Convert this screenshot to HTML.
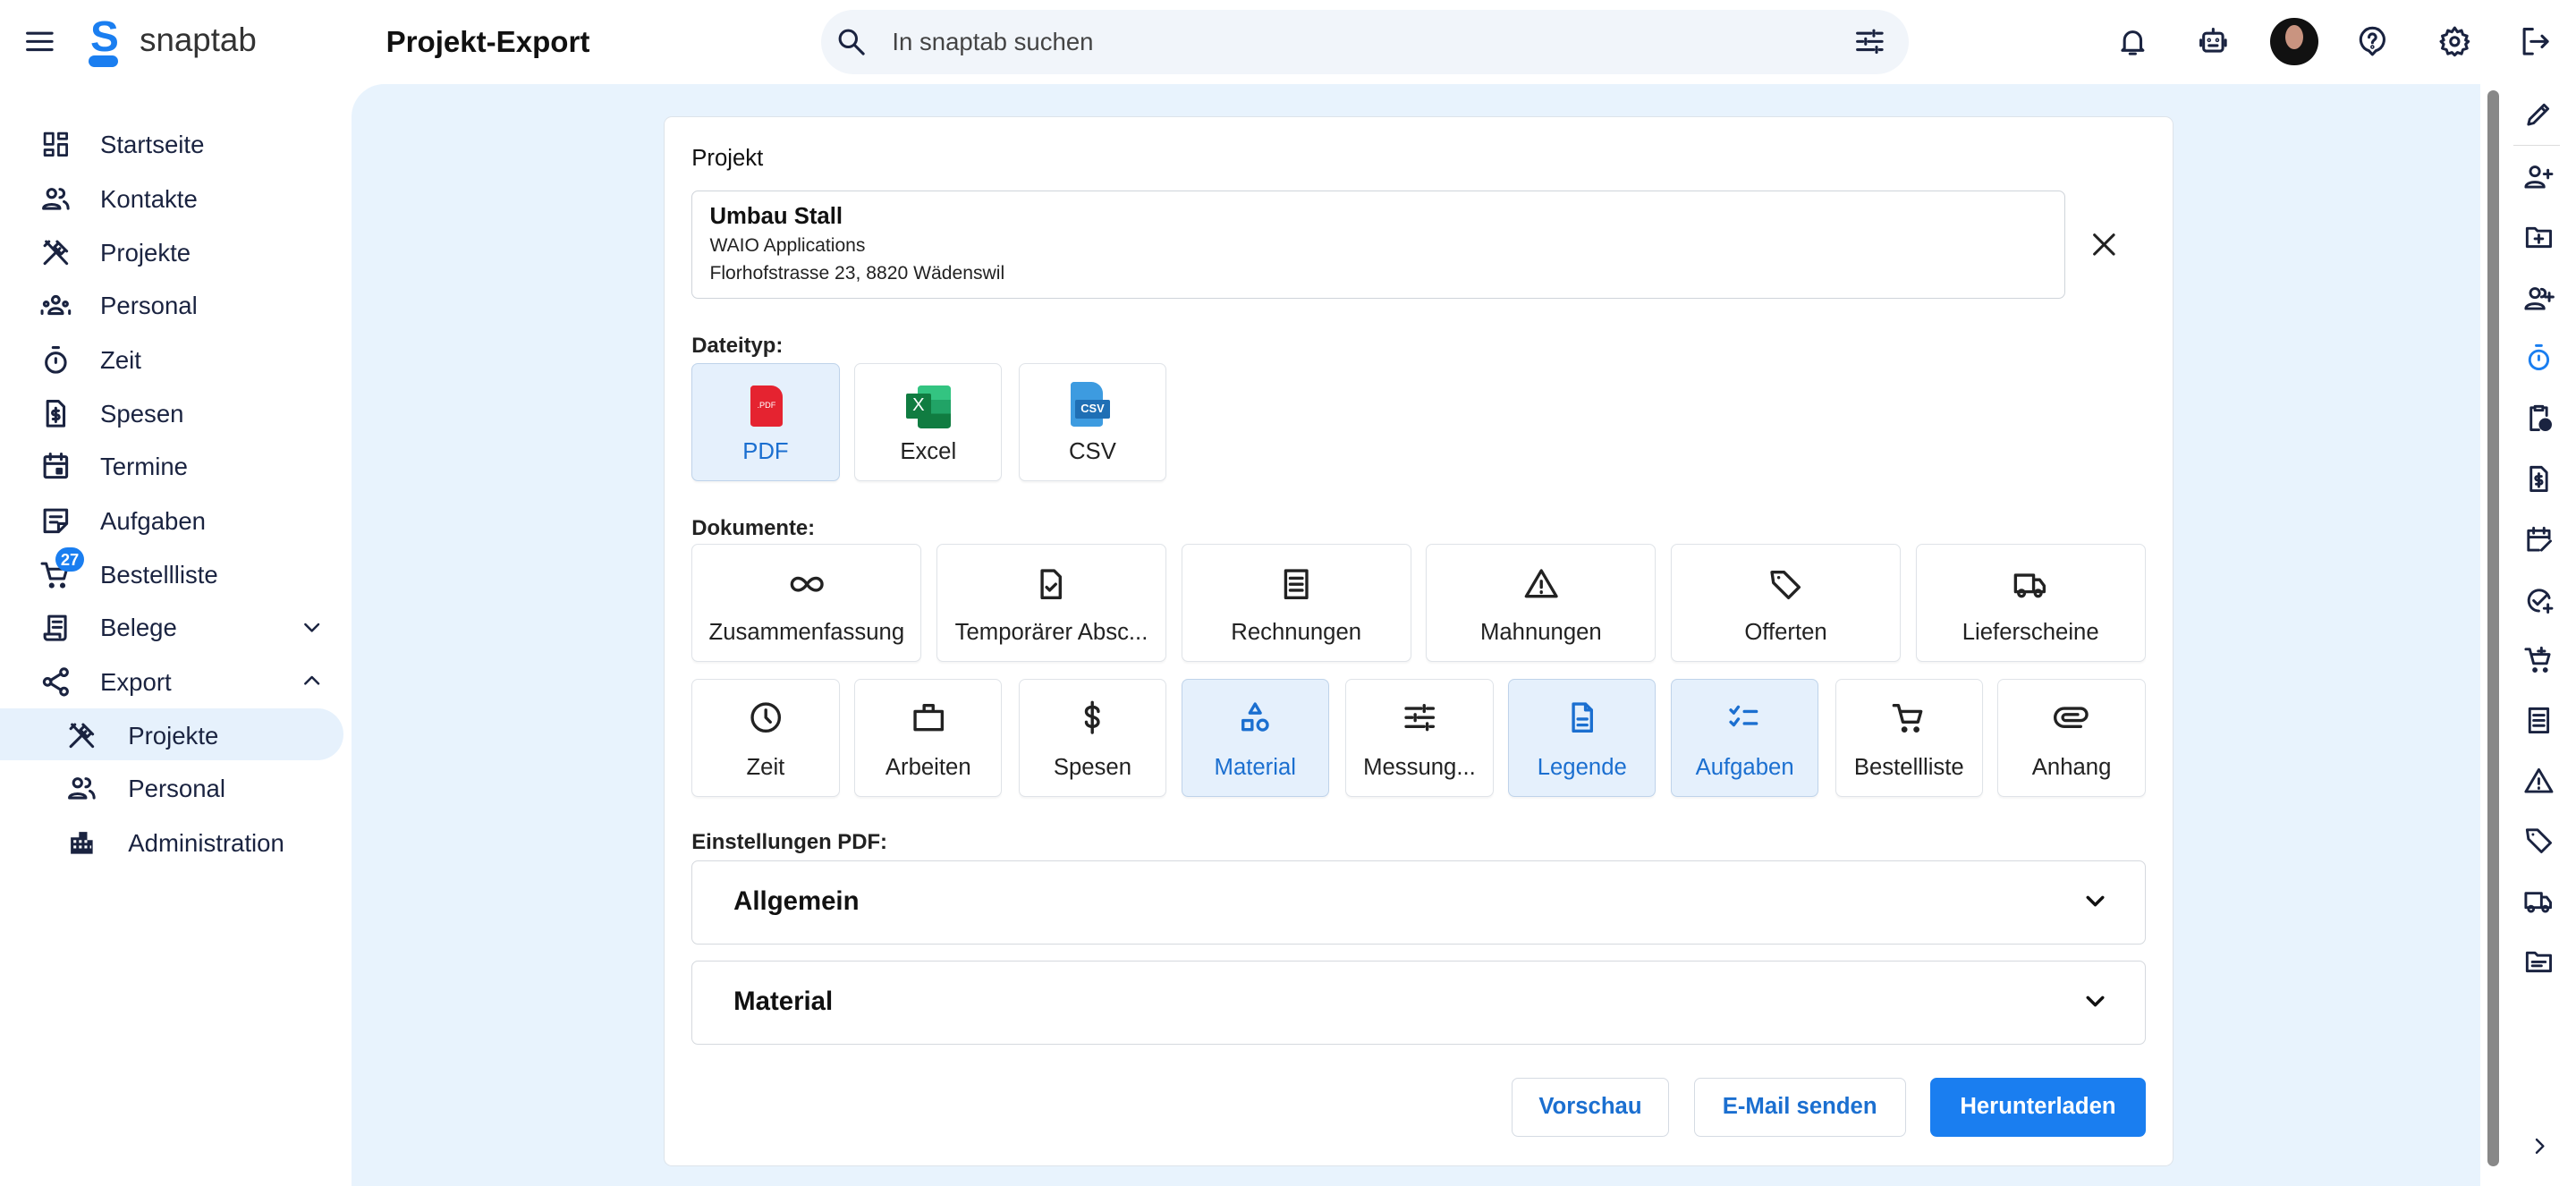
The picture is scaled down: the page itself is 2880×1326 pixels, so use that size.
<!DOCTYPE html>
<html><head><meta charset="utf-8">
<style>
*{box-sizing:border-box;margin:0;padding:0}
html,body{width:2880px;height:1326px;overflow:hidden;background:#fff}
#r{position:absolute;left:0;top:0;width:1568px;height:722px;zoom:1.83673;font-family:"Liberation Sans",sans-serif;color:#1a2340}
.a{position:absolute}
svg{display:block}
.ic{position:absolute;width:20px;height:20px;fill:none;stroke:#1a2340;stroke-width:2;stroke-linecap:round;stroke-linejoin:round}
.nav{position:absolute;font-size:15px;line-height:18px;color:#1a2340}
.tile{position:absolute;background:#fff;border:1px solid #dfe3e8;border-radius:4px;text-align:center;font-size:14px;color:#222;box-shadow:0 1px 1px rgba(0,0,0,.04)}
.tile.s{background:#e5f0fc;border-color:#bfd3ea;color:#1b6fd0}
.tile .t{position:absolute;left:0;right:0;white-space:nowrap;overflow:hidden;text-overflow:ellipsis;padding:0 6px}
.tile svg{position:absolute;left:50%;width:22px;height:22px;margin-left:-11px;fill:none;stroke:#222;stroke-width:2;stroke-linecap:round;stroke-linejoin:round}
.tile.s svg{stroke:#1b6fd0}
.lbl{position:absolute;font-size:13px;font-weight:bold;color:#222}
.acc{position:absolute;left:421px;width:885px;height:51px;border:1px solid #d5d9de;border-radius:4px;background:#fff}
.acc b{position:absolute;left:25px;top:15px;font-size:16px;color:#111}
.btn{position:absolute;top:656px;height:36px;border:1px solid #d5dbe3;border-radius:4px;background:#fff;color:#1b6fd0;font-size:14px;font-weight:bold;text-align:center;line-height:34px}
.rr{position:absolute;left:1536px;width:19px;height:19px;fill:none;stroke:#1a2340;stroke-width:2;stroke-linecap:round;stroke-linejoin:round}
</style></head><body><div id="r">

<!-- header -->
<svg class="ic" style="left:14px;top:15px" viewBox="0 0 24 24"><path d="M3 6h18M3 12h18M3 18h18"/></svg>
<div class="a" style="left:52px;top:11px;width:22px;height:30px">
<div class="a" style="left:3px;top:0;font-size:26px;font-weight:bold;color:#1a7ef0;line-height:24px">S</div>
<div class="a" style="left:2px;top:23px;width:18px;height:7px;border-radius:4px;background:#1a7ef0"></div></div>
<div class="a" style="left:85px;top:13px;font-size:20px;color:#333">snaptab</div>
<div class="a" style="left:235px;top:16px;font-size:18px;font-weight:bold;color:#111">Projekt-Export</div>
<div class="a" style="left:500px;top:6px;width:662px;height:39px;border-radius:20px;background:#f1f5fa"></div>
<svg class="ic" style="left:508px;top:15px" viewBox="0 0 24 24"><circle cx="10" cy="10" r="6"/><path d="M15 15l6 6"/></svg>
<div class="a" style="left:543px;top:17px;font-size:15px;color:#444">In snaptab suchen</div>
<svg class="ic" style="left:1128px;top:15px" viewBox="0 0 24 24"><path d="M3 6h10M17 6h4M15 4v4M3 12h4M11 12h10M9 10v4M3 18h12M19 18h2M17 16v4"/></svg>
<svg class="ic" style="left:1288px;top:15px" viewBox="0 0 24 24"><path d="M6 17V11a6 6 0 0 1 12 0v6l1.5 1.5h-15z M10 21h4"/></svg>
<svg class="ic" style="left:1337px;top:15px" viewBox="0 0 24 24"><rect x="5" y="6" width="14" height="13" rx="2"/><path d="M12 3v3M3 11v4M21 11v4M9 15h6"/><circle cx="9" cy="11" r=".5"/><circle cx="15" cy="11" r=".5"/></svg>
<div class="a" style="left:1382px;top:11px;width:29px;height:29px;border-radius:50%;background:#111;overflow:hidden"><div class="a" style="left:9px;top:4px;width:11px;height:15px;border-radius:50%;background:#c99480"></div></div>
<svg class="ic" style="left:1434px;top:15px" viewBox="0 0 24 24"><path d="M12 21.5l-2.5-2.7A8.5 8.5 0 1 1 14.5 18.8z"/><path d="M9.5 9a2.5 2.5 0 0 1 5 0c0 2-2.5 2-2.5 4"/><circle cx="12" cy="16" r=".5"/></svg>
<svg class="ic" style="left:1484px;top:15px" viewBox="0 0 24 24"><circle cx="12" cy="12" r="3"/><path d="M12 2l2 3 3-1 1 3 3 1-1 3 2 1-2 2 1 3-3 1-1 3-3-1-2 2-2-2-3 1-1-3-3-1 1-3-2-2 2-1-1-3 3-1 1-3 3 1z"/></svg>
<svg class="ic" style="left:1533px;top:15px" viewBox="0 0 24 24"><path d="M10 3H4v18h6M9 12h12M17 8l4 4-4 4"/></svg>

<!-- sidebar -->
<svg class="ic" style="left:24px;top:78px;stroke-width:1.8" viewBox="0 0 24 24"><rect x="4" y="4" width="6" height="8"/><rect x="14" y="4" width="6" height="4"/><rect x="4" y="16" width="6" height="4"/><rect x="14" y="12" width="6" height="8"/></svg><div class="nav" style="left:61px;top:79px">Startseite</div>
<svg class="ic" style="left:24px;top:111px" viewBox="0 0 24 24"><circle cx="9" cy="8" r="3"/><path d="M3 19c0-4 12-4 12 0zM15 5a3 3 0 0 1 0 6M18 14c2 1 3 3 3 5"/></svg><div class="nav" style="left:61px;top:112px">Kontakte</div>
<svg class="ic" style="left:24px;top:144px" viewBox="0 0 24 24"><path d="M4 20L15 9M13 4l7 7M14 5l-3 3 5 5 3-3M5 4l15 16M4 7l3-3"/></svg><div class="nav" style="left:61px;top:145px">Projekte</div>
<svg class="ic" style="left:24px;top:176px" viewBox="0 0 24 24"><circle cx="12" cy="8" r="2.5"/><path d="M7 18c0-5 10-5 10 0z"/><circle cx="5" cy="11" r="1.5"/><circle cx="19" cy="11" r="1.5"/><path d="M2 18v-2M22 18v-2"/></svg><div class="nav" style="left:61px;top:177px">Personal</div>
<svg class="ic" style="left:24px;top:209px" viewBox="0 0 24 24"><circle cx="12" cy="14" r="7"/><path d="M10 3h4M12 11v3"/></svg><div class="nav" style="left:61px;top:210px">Zeit</div>
<svg class="ic" style="left:24px;top:242px" viewBox="0 0 24 24"><path d="M6 3h8l4 4v14H6zM14 10h-3a1.5 1.5 0 0 0 0 3h2a1.5 1.5 0 0 1 0 3h-3M12 8v10"/></svg><div class="nav" style="left:61px;top:243px">Spesen</div>
<svg class="ic" style="left:24px;top:274px" viewBox="0 0 24 24"><rect x="4" y="5" width="16" height="15" rx="1"/><path d="M4 10h16M8 3v4M16 3v4"/><rect x="13" y="14" width="3" height="3" fill="#1a2340"/></svg><div class="nav" style="left:61px;top:275px">Termine</div>
<svg class="ic" style="left:24px;top:307px" viewBox="0 0 24 24"><path d="M4 4h16v10l-6 6H4zM8 9h8M8 13h5M14 20v-6h6"/></svg><div class="nav" style="left:61px;top:308px">Aufgaben</div>
<svg class="ic" style="left:24px;top:340px" viewBox="0 0 24 24"><path d="M2 4h3l3 11h10l2-7H7"/><circle cx="9" cy="20" r="1"/><circle cx="17" cy="20" r="1"/></svg>
<div class="a" style="left:34px;top:333px;width:17px;height:15px;border-radius:8px;background:#1a7ef0;color:#fff;font-size:10px;font-weight:bold;text-align:center;line-height:15px">27</div>
<div class="nav" style="left:61px;top:341px">Bestellliste</div>
<svg class="ic" style="left:24px;top:372px" viewBox="0 0 24 24"><path d="M7 17V4h12v15a2 2 0 0 1-2 2H6a2 2 0 0 1-2-2v-2h11v2M10 8h6M10 12h6"/></svg><div class="nav" style="left:61px;top:373px">Belege</div>
<svg class="ic" style="left:182px;top:374px;width:16px;height:16px" viewBox="0 0 24 24"><path d="M6 9l6 6 6-6"/></svg>
<svg class="ic" style="left:24px;top:405px" viewBox="0 0 24 24"><circle cx="18" cy="5" r="2.5"/><circle cx="6" cy="12" r="2.5"/><circle cx="18" cy="19" r="2.5"/><path d="M8 11l8-5M8 13l8 5"/></svg><div class="nav" style="left:61px;top:406px">Export</div>
<svg class="ic" style="left:182px;top:406px;width:16px;height:16px" viewBox="0 0 24 24"><path d="M6 15l6-6 6 6"/></svg>
<div class="a" style="left:0;top:431px;width:209px;height:32px;border-radius:0 16px 16px 0;background:#e6f1fc"></div>
<svg class="ic" style="left:40px;top:438px" viewBox="0 0 24 24"><path d="M4 20L15 9M13 4l7 7M14 5l-3 3 5 5 3-3M5 4l15 16M4 7l3-3"/></svg><div class="nav" style="left:78px;top:439px">Projekte</div>
<svg class="ic" style="left:40px;top:470px" viewBox="0 0 24 24"><circle cx="9" cy="8" r="3"/><path d="M3 19c0-4 12-4 12 0zM15 5a3 3 0 0 1 0 6M18 14c2 1 3 3 3 5"/></svg><div class="nav" style="left:78px;top:471px">Personal</div>
<svg class="ic" style="left:40px;top:503px;fill:#1a2340;stroke:none" viewBox="0 0 24 24"><path d="M4 8h6V4h6v6h4v10H4zM6 10v2h2v-2zm4 0v2h2v-2zm4 0v2h2v-2zM6 14v2h2v-2zm4 0v2h2v-2zm4 0v2h2v-2zm4 0v2h1v-2z" fill-rule="evenodd"/></svg><div class="nav" style="left:78px;top:504px">Administration</div>

<!-- main -->
<div class="a" style="left:214px;top:51px;width:1296px;height:671px;background:#e8f3fd;border-radius:20px 0 0 0"></div>
<div class="a" style="left:1514px;top:55px;width:7px;height:655px;border-radius:4px;background:#888"></div>

<!-- right rail -->
<svg class="rr" style="top:60px" viewBox="0 0 24 24"><path d="M4 20l1-4L16 5l3 3L8 19zM14 7l3 3"/></svg>
<div class="a" style="left:1530px;top:88px;width:28px;height:1px;background:#ddd"></div>
<svg class="rr" style="top:98px" viewBox="0 0 24 24"><circle cx="9" cy="8" r="3.5"/><path d="M2 20c0-5 14-5 14 0zM19 7v6M16 10h6"/></svg>
<svg class="rr" style="top:135px" viewBox="0 0 24 24"><path d="M3 5h6l2 2h10v12H3zM12 10v6M9 13h6"/></svg>
<svg class="rr" style="top:172px" viewBox="0 0 24 24"><circle cx="9" cy="8" r="3.5"/><path d="M2 20c0-5 14-5 14 0zM14 5a3 3 0 0 1 0 6M20 8v6M17 11h6"/></svg>
<svg class="rr" style="top:208px;stroke:#1a7ef0" viewBox="0 0 24 24"><circle cx="12" cy="14" r="7"/><path d="M10 3h4M12 11v3"/></svg>
<svg class="rr" style="top:245px" viewBox="0 0 24 24"><path d="M9 4H6v17h6M15 4h3v6M9 3h6v3H9z"/><circle cx="17" cy="17" r="4" fill="#1a2340"/></svg>
<svg class="rr" style="top:282px" viewBox="0 0 24 24"><path d="M6 3h8l4 4v14H6zM14 10h-3a1.5 1.5 0 0 0 0 3h2a1.5 1.5 0 0 1 0 3h-3M12 8v10"/></svg>
<svg class="rr" style="top:319px" viewBox="0 0 24 24"><path d="M12 20H4V5h16v6M4 10h16M8 3v4M16 3v4M14 20l7-7"/></svg>
<svg class="rr" style="top:356px" viewBox="0 0 24 24"><path d="M20 10A8 8 0 1 0 12 20M8 12l3 3 7-7M19 15v6M16 18h6"/></svg>
<svg class="rr" style="top:392px" viewBox="0 0 24 24"><path d="M2 4h3l3 11h10l2-7H7M14 3v5M11.5 5.5h5"/><circle cx="9" cy="20" r="1"/><circle cx="17" cy="20" r="1"/></svg>
<svg class="rr" style="top:429px" viewBox="0 0 24 24"><path d="M5 3h14v18H5zM8 8h8M8 12h8M8 16h8"/></svg>
<svg class="rr" style="top:466px" viewBox="0 0 24 24"><path d="M12 3L2 20h20zM12 10v4M12 17v.5"/></svg>
<svg class="rr" style="top:502px" viewBox="0 0 24 24"><path d="M3 4h8l10 10-7 7L4 11zM7.5 7.5v.1"/></svg>
<svg class="rr" style="top:539px" viewBox="0 0 24 24"><path d="M2 6h12v11H2zM14 9h4l3 4v4h-7"/><circle cx="6" cy="18" r="2"/><circle cx="17" cy="18" r="2"/></svg>
<svg class="rr" style="top:576px" viewBox="0 0 24 24"><path d="M3 5h6l2 2h10v12H3zM7 12h10M7 15h7"/></svg>
<svg class="rr" style="top:688px;width:16px;left:1538px" viewBox="0 0 24 24"><path d="M9 6l6 6-6 6"/></svg>

<!-- card -->
<div class="a" style="left:404px;top:71px;width:919px;height:639px;background:#fff;border:1px solid #dde3ea;border-radius:5px"></div>
<div class="a" style="left:421px;top:89px;font-size:14px;color:#111">Projekt</div>
<div class="a" style="left:421px;top:116px;width:836px;height:66px;border:1px solid #cfd4da;border-radius:4px"></div>
<div class="a" style="left:432px;top:124px;font-size:14px;font-weight:bold;color:#111">Umbau Stall</div>
<div class="a" style="left:432px;top:143px;font-size:11.5px;color:#222">WAIO Applications</div>
<div class="a" style="left:432px;top:160px;font-size:11.5px;color:#222">Florhofstrasse 23, 8820 Wädenswil</div>
<svg class="ic" style="left:1271px;top:139px;stroke:#222" viewBox="0 0 24 24"><path d="M5 5l14 14M19 5L5 19"/></svg>

<div class="lbl" style="left:421px;top:203px">Dateityp:</div>
<div class="tile s" style="left:421px;top:221px;width:90px;height:72px">
<div class="a" style="left:35px;top:13px;width:20px;height:25px;background:#e52330;border-radius:2px 7px 2px 2px;color:#fff;font-size:5px;line-height:25px">.PDF</div><div class="t" style="top:46px">PDF</div></div>
<div class="tile" style="left:520px;top:221px;width:90px;height:72px">
<div class="a" style="left:38px;top:13px;width:20px;height:26px;border-radius:2px;background:linear-gradient(#33c481 0 33%,#21a366 33% 66%,#107c41 66%)"></div><div class="a" style="left:31px;top:18px;width:15px;height:15px;background:#107c41;color:#fff;font-size:11px;line-height:15px;border-radius:1px">X</div><div class="t" style="top:46px">Excel</div></div>
<div class="tile" style="left:620px;top:221px;width:90px;height:72px">
<div class="a" style="left:31px;top:11px;width:20px;height:27px;background:#3d9be0;border-radius:2px 7px 2px 2px"></div><div class="a" style="left:34px;top:22px;width:21px;height:11px;background:#1f6fb5;color:#fff;font-size:7px;font-weight:bold;line-height:11px;border-radius:1px">CSV</div><div class="t" style="top:46px">CSV</div></div>

<div class="lbl" style="left:421px;top:314px">Dokumente:</div>
<!-- row1 -->
<div class="tile" style="left:421px;top:331px;width:140px;height:72px"><svg style="top:13px" viewBox="0 0 24 24"><path d="M12 12c-2-3-4-4-6-4a4 4 0 0 0 0 8c2 0 4-1 6-4s4-4 6-4a4 4 0 0 1 0 8c-2 0-4-1-6-4"/></svg><div class="t" style="top:46px">Zusammenfassung</div></div>
<div class="tile" style="left:570px;top:331px;width:140px;height:72px"><svg style="top:13px" viewBox="0 0 24 24"><path d="M6 3h8l4 4v14H6zM9 14l2 2 4-4"/></svg><div class="t" style="top:46px">Temporärer Absc...</div></div>
<div class="tile" style="left:719px;top:331px;width:140px;height:72px"><svg style="top:13px" viewBox="0 0 24 24"><path d="M5 3h14v18H5zM8 8h8M8 12h8M8 16h8"/></svg><div class="t" style="top:46px">Rechnungen</div></div>
<div class="tile" style="left:868px;top:331px;width:140px;height:72px"><svg style="top:13px" viewBox="0 0 24 24"><path d="M12 3L2 20h20zM12 10v4M12 17v.5"/></svg><div class="t" style="top:46px">Mahnungen</div></div>
<div class="tile" style="left:1017px;top:331px;width:140px;height:72px"><svg style="top:13px" viewBox="0 0 24 24"><path d="M3 4h8l10 10-7 7L4 11zM7.5 7.5v.1"/></svg><div class="t" style="top:46px">Offerten</div></div>
<div class="tile" style="left:1166px;top:331px;width:140px;height:72px"><svg style="top:13px" viewBox="0 0 24 24"><path d="M2 6h12v11H2zM14 9h4l3 4v4h-7"/><circle cx="6" cy="18" r="2"/><circle cx="17" cy="18" r="2"/></svg><div class="t" style="top:46px">Lieferscheine</div></div>
<!-- row2 -->
<div class="tile" style="left:421px;top:413px;width:90px;height:72px"><svg style="top:12px" viewBox="0 0 24 24"><circle cx="12" cy="12" r="9"/><path d="M12 7v5l3 3"/></svg><div class="t" style="top:46px">Zeit</div></div>
<div class="tile" style="left:520px;top:413px;width:90px;height:72px"><svg style="top:12px" viewBox="0 0 24 24"><path d="M3 8h18v12H3zM9 8V4h6v4"/></svg><div class="t" style="top:46px">Arbeiten</div></div>
<div class="tile" style="left:620px;top:413px;width:90px;height:72px"><svg style="top:12px" viewBox="0 0 24 24"><path d="M16 8c0-2-2-3-4-3s-4 1-4 3 2 3 4 3.5 4 1.5 4 3.5-2 3-4 3-4-1-4-3M12 2v20"/></svg><div class="t" style="top:46px">Spesen</div></div>
<div class="tile s" style="left:719px;top:413px;width:90px;height:72px"><svg style="top:12px" viewBox="0 0 24 24"><path d="M12 3l3.5 6h-7zM4 14h6v6H4z"/><circle cx="17" cy="17" r="3.2"/></svg><div class="t" style="top:46px">Material</div></div>
<div class="tile" style="left:819px;top:413px;width:90px;height:72px"><svg style="top:12px" viewBox="0 0 24 24"><path d="M3 6h10M17 6h4M15 4v4M3 12h4M11 12h10M9 10v4M3 18h12M19 18h2M17 16v4"/></svg><div class="t" style="top:46px">Messung...</div></div>
<div class="tile s" style="left:918px;top:413px;width:90px;height:72px"><svg style="top:12px" viewBox="0 0 24 24"><path d="M6 3h8l4 4v14H6zM14 3v4h4M9 13h6M9 17h6"/></svg><div class="t" style="top:46px">Legende</div></div>
<div class="tile s" style="left:1017px;top:413px;width:90px;height:72px"><svg style="top:12px" viewBox="0 0 24 24"><path d="M3 7l2 2 3-4M3 15l2 2 3-4M12 8h8M12 16h8"/></svg><div class="t" style="top:46px">Aufgaben</div></div>
<div class="tile" style="left:1117px;top:413px;width:90px;height:72px"><svg style="top:12px" viewBox="0 0 24 24"><path d="M2 4h3l3 11h10l2-7H7"/><circle cx="9" cy="20" r="1"/><circle cx="17" cy="20" r="1"/></svg><div class="t" style="top:46px">Bestellliste</div></div>
<div class="tile" style="left:1216px;top:413px;width:90px;height:72px"><svg style="top:12px" viewBox="0 0 24 24"><path d="M16 10H8a2 2 0 0 0 0 4h10a4 4 0 0 0 0-8H7a6 6 0 0 0 0 12h11"/></svg><div class="t" style="top:46px">Anhang</div></div>

<div class="lbl" style="left:421px;top:505px">Einstellungen PDF:</div>
<div class="acc" style="top:524px"><b>Allgemein</b><svg class="ic" style="left:845px;top:15px;width:18px;height:18px;stroke:#111;stroke-width:2.5" viewBox="0 0 24 24"><path d="M6 9l6 6 6-6"/></svg></div>
<div class="acc" style="top:585px"><b>Material</b><svg class="ic" style="left:845px;top:15px;width:18px;height:18px;stroke:#111;stroke-width:2.5" viewBox="0 0 24 24"><path d="M6 9l6 6 6-6"/></svg></div>

<div class="btn" style="left:920px;width:96px">Vorschau</div>
<div class="btn" style="left:1031px;width:129px">E-Mail senden</div>
<div class="btn" style="left:1175px;width:131px;background:#1a7ef0;border-color:#1a7ef0;color:#fff">Herunterladen</div>

</div></body></html>
